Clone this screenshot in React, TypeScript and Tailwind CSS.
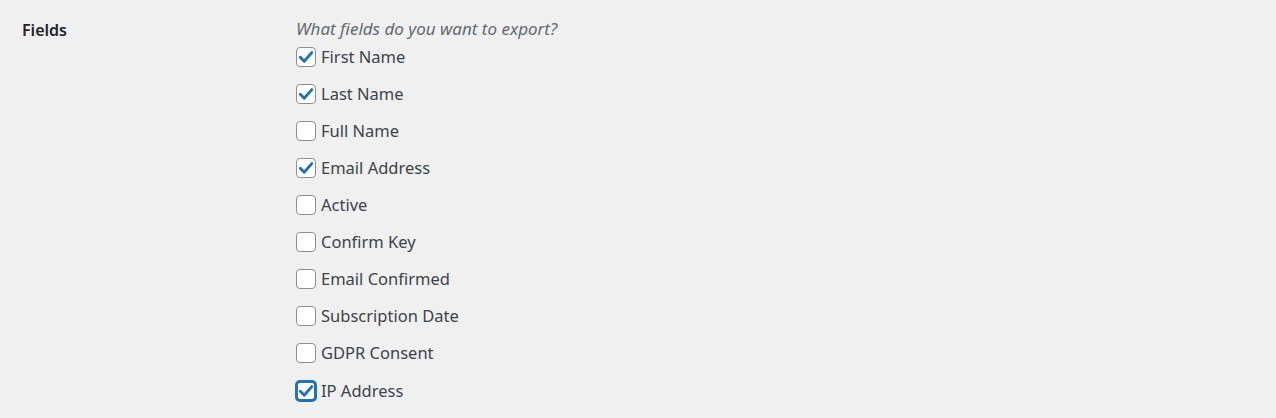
import React from 'react'

const FIELDS = [
  { label: 'First Name', checked: true },
  { label: 'Last Name', checked: true },
  { label: 'Full Name', checked: false },
  { label: 'Email Address', checked: true },
  { label: 'Active', checked: false },
  { label: 'Confirm Key', checked: false },
  { label: 'Email Confirmed', checked: false },
  { label: 'Subscription Date', checked: false },
  { label: 'GDPR Consent', checked: false },
  { label: 'IP Address', checked: true, focus: true },
]

function Box({ checked, focus }: { checked: boolean; focus?: boolean }) {
  return (
    <span
      className={
        focus
          ? 'w-5 h-5 shrink-0 rounded-[4px] bg-white border-2 border-[#2271b1] shadow-[0_0_0_1px_#2271b1] flex items-center justify-center'
          : 'w-5 h-5 shrink-0 rounded-[4px] bg-white border border-[#8c8f94] flex items-center justify-center'
      }
    >
      {checked && (
        <svg viewBox="0 0 20 20" className="w-5 h-5 shrink-0">
          <path d="M4.3 10.3 L8.2 14.2 L15.8 5.6" fill="none" stroke="#2271b1" strokeWidth="2.9" strokeLinecap="round" strokeLinejoin="round" />
        </svg>
      )}
    </span>
  )
}

export default function App() {
  return (
    <div className="w-[1276px] h-[418px] bg-[#f0f0f1] flex text-[#3c434a] font-['Noto_Sans',sans-serif] overflow-hidden">
      <div className="w-[296px] shrink-0 pl-[22px] pt-[18px] text-[16px] font-semibold text-[#1d2327]">Fields</div>
      <div className="flex flex-col pt-[17px]">
        <p className="text-[17px] italic text-[#646970] leading-[24px] mb-[6px]">What fields do you want to export?</p>
        <div className="flex flex-col gap-[17px]">
          {FIELDS.map((f) => (
            <label
              key={f.label}
              className={
                f.focus
                  ? 'flex items-center gap-[5px] h-5 mt-px text-[16.5px] leading-5'
                  : 'flex items-center gap-[5px] h-5 text-[16.5px] leading-5'
              }
            >
              <Box checked={f.checked} focus={f.focus} />
              <span>{f.label}</span>
            </label>
          ))}
        </div>
      </div>
    </div>
  )
}
